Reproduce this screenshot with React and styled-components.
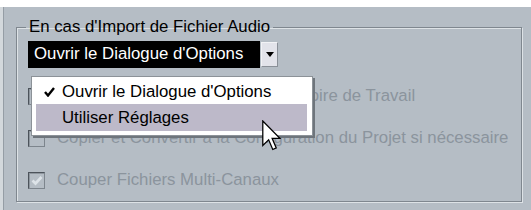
import React from "react";
import styled, { createGlobalStyle } from "styled-components";

const Global = createGlobalStyle`
  html, body {
    margin: 0;
    padding: 0;
    background: #ffffff;
    font-family: "Liberation Sans", Arial, sans-serif;
  }
`;

const Panel = styled.div`
  margin-top: 7px;
  height: 203px;
  box-sizing: border-box;
  background: #b5bdc5;
  border-left: 3px solid #d3d8dc;
  box-shadow: inset 1px 0 0 #959da5;
  padding: 11px 9px 0 13px;
`;

const Group = styled.fieldset`
  margin: 0;
  padding: 0 11px 0 11px;
  border: 1px solid #7f878f;
  box-shadow: 1px 1px 0 #dde2e6, inset 1px 1px 0 #dde2e6;
  font-size: 16.8px;
`;

const Legend = styled.legend`
  padding: 0 3px;
  margin-left: -2px;
  line-height: 18px;
  color: #000;
`;

const SelectWrap = styled.div`
  position: relative;
  margin-top: 5px;
  display: flex;
  width: 250px;
  height: 27px;
`;

const SelectValue = styled.div`
  flex: 1;
  background: #000;
  color: #fff;
  display: flex;
  align-items: center;
  padding-left: 6px;
  line-height: 1;
  white-space: nowrap;
`;

const ArrowBtn = styled.div`
  width: 15px;
  margin: 1px 0 1px 1px;
  background: #e2e3ea;
  border: 1px solid #f2f3f6;
  border-right-color: #8a9098;
  border-bottom-color: #8a9098;
  display: flex;
  align-items: center;
  justify-content: center;
`;

const Menu = styled.div`
  position: absolute;
  left: 3px;
  top: 35px;
  width: 282px;
  box-sizing: border-box;
  background: #fff;
  border: 1px solid #8c9298;
  box-shadow: 2px 2px 0 #6e757c;
  padding: 2px 5px 4px 4px;
  z-index: 2;
`;

const MenuItem = styled.div`
  height: ${(p) => (p.$first ? "25px" : "27px")};
  display: flex;
  align-items: center;
  background: ${(p) => (p.$hover ? "#bdb9c9" : "transparent")};
  color: #000;
  white-space: nowrap;
`;

const CheckSlot = styled.div`
  width: 26px;
  display: flex;
  justify-content: center;
`;

const Cursor = styled.svg`
  position: absolute;
  left: 230px;
  top: 43px;
`;

const Rows = styled.div`
  margin-top: 7px;
`;

const Row = styled.div`
  height: 42px;
  display: flex;
  align-items: center;
  color: #8b949d;
`;

const Box = styled.div`
  width: 15px;
  height: 15px;
  border: 1px solid #4c535b;
  border-right-color: #7d858d;
  border-bottom-color: #7d858d;
  box-shadow: inset 1px 1px 0 #8e969e;
  margin-right: 12px;
  display: flex;
  align-items: center;
  justify-content: center;
`;

const Label = styled.span`
  white-space: nowrap;
  line-height: 1;
`;

export default function App() {
  return (
    <>
      <Global />
      <Panel>
        <Group>
          <Legend>En cas d'Import de Fichier Audio</Legend>
          <SelectWrap>
            <SelectValue>Ouvrir le Dialogue d'Options</SelectValue>
            <ArrowBtn>
              <svg width="8" height="5" viewBox="0 0 8 5">
                <path d="M0 0 H8 L4 5 Z" fill="#000" />
              </svg>
            </ArrowBtn>
            <Menu>
              <MenuItem $first>
                <CheckSlot>
                  <svg width="11" height="10" viewBox="0 0 11 10">
                    <path d="M1 5 L4 8.5 L10 1" stroke="#000" strokeWidth="2.4" fill="none" />
                  </svg>
                </CheckSlot>
                Ouvrir le Dialogue d'Options
              </MenuItem>
              <MenuItem $hover>
                <CheckSlot />
                Utiliser Réglages
              </MenuItem>
              <Cursor width="19" height="32" viewBox="0 0 12 20">
                <path
                  d="M0.5 0.5 L0.5 16 L4.2 12.4 L6.8 18.5 L9 17.5 L6.4 11.5 L11.3 11.5 Z"
                  fill="#fff"
                  stroke="#000"
                  strokeWidth="0.8"
                />
              </Cursor>
            </Menu>
          </SelectWrap>
          <Rows>
            <Row>
              <Box />
              <Label>Copier les Fichiers dans le Répertoire de Travail</Label>
            </Row>
            <Row>
              <Box />
              <Label>Copier et Convertir à la Configuration du Projet si nécessaire</Label>
            </Row>
            <Row>
              <Box>
                <svg width="12" height="11" viewBox="0 0 12 11">
                  <path d="M1.5 5.5 L4.5 8.5 L10.5 2" stroke="#dde3e8" strokeWidth="2.6" fill="none" />
                </svg>
              </Box>
              <Label>Couper Fichiers Multi-Canaux</Label>
            </Row>
          </Rows>
        </Group>
      </Panel>
    </>
  );
}
